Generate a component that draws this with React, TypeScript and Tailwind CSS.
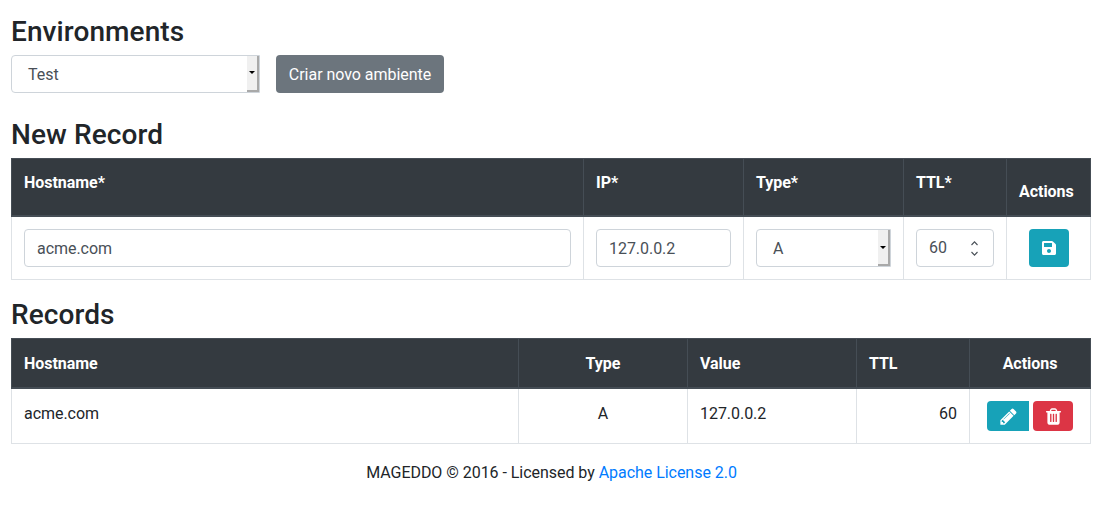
import { FaSave } from 'react-icons/fa';

const PENCIL = "M491 1536l91-91-235-235-91 91v107h128v128h107zm523-928q0-22-22-22-10 0-17 7l-542 542q-7 7-7 17 0 22 22 22 10 0 17-7l542-542q7-7 7-17zm-54-192l416 416-832 832h-416v-416zm683 96q0 53-37 90l-166 166-416-416 166-165q36-38 90-38 53 0 91 38l235 234q37 39 37 91z";
const TRASH = "M704 1376v-704q0-14-9-23t-23-9h-64q-14 0-23 9t-9 23v704q0 14 9 23t23 9h64q14 0 23-9t9-23zm256 0v-704q0-14-9-23t-23-9h-64q-14 0-23 9t-9 23v704q0 14 9 23t23 9h64q14 0 23-9t9-23zm256 0v-704q0-14-9-23t-23-9h-64q-14 0-23 9t-9 23v704q0 14 9 23t23 9h64q14 0 23-9t9-23zm-544-992h448l-48-117q-7-9-17-11h-317q-10 2-17 11zm928 32v64q0 14-9 23t-23 9h-96v948q0 83-47 143.5t-113 60.5h-832q-66 0-113-58.5t-47-141.5v-952h-96q-14 0-23-9t-9-23v-64q0-14 9-23t23-9h309l70-167q15-37 54-63t79-26h320q40 0 79 26t54 63l70 167h309q14 0 23 9t9 23z";

function FakeSelect({ value, className }: { value: string; className: string }) {
  return (
    <div className={`flex h-[38px] rounded-l-[4px] border border-[#ced4da] bg-white text-[#495057] ${className}`}>
      <div className="flex-1 pt-px pl-4 leading-[36px]">{value}</div>
      <div className="flex w-[12px] items-center justify-center border-r-2 border-b-2 border-[#a9a9a9] bg-[#f0f0f0]">
        <div className="h-0 w-0 border-x-[3px] border-t-[3px] border-x-transparent border-t-black" />
      </div>
    </div>
  );
}

const thHead = "border border-[#454d55] border-b-2 align-top px-3 pt-3 text-left font-bold";
const thBottom = "border border-[#454d55] border-b-2 align-bottom px-3 pt-[13px] pb-[11px] font-bold";
const td = "border border-[#dee2e6] p-3 align-top";
const tdText = "border border-[#dee2e6] px-3 pt-[13px] pb-[11px] align-top";
const inputCls = "block h-[38px] w-full rounded-[4px] border border-[#ced4da] bg-white px-3 text-[#495057]";
const heading = "mb-[6.4px] text-[28px] leading-[33.6px] font-medium tracking-[0.09px]";

export default function App() {
  return (
    <div className="w-[1112px] pl-[11px] pt-[15px] font-['Roboto',sans-serif] text-base tracking-[-0.04px] text-[#212529]">
      <div className="w-[1079px]">
        <h3 className={heading}>Environments</h3>
        <div className="flex gap-4">
          <FakeSelect value="Test" className="w-[249px]" />
          <button className="h-[38px] w-[168px] rounded-[4px] bg-[#6c757d] pt-[2px] text-center text-white">Criar novo ambiente</button>
        </div>

        <h3 className={`mt-[25px] ${heading}`}>New Record</h3>
        <table className="w-[1079px] table-fixed border-collapse">
          <colgroup>
            <col className="w-[572px]" />
            <col className="w-[160px]" />
            <col className="w-[160px]" />
            <col className="w-[103px]" />
            <col className="w-[84px]" />
          </colgroup>
          <thead className="bg-[#343a40] text-white">
            <tr className="h-[58px]">
              <th className={thHead}>Hostname*</th>
              <th className={thHead}>IP*</th>
              <th className={thHead}>Type*</th>
              <th className={thHead}>TTL*</th>
              <th className={`${thBottom} text-left`}>Actions</th>
            </tr>
          </thead>
          <tbody>
            <tr>
              <td className={td}><input readOnly value="acme.com" className={inputCls} /></td>
              <td className={td}><input readOnly value="127.0.0.2" className={inputCls} /></td>
              <td className={td}><FakeSelect value="A" className="w-[135px]" /></td>
              <td className={td}>
                <div className="flex h-[38px] items-center justify-between rounded-[4px] border border-[#ced4da] bg-white pr-[14px] pl-3 text-[#495057]">
                  <span>60</span>
                  <svg width="9" height="15" viewBox="0 0 9 15" fill="none" stroke="#495057" strokeWidth="1.1">
                    <path d="M1.5 4L4.5 0.8L7.5 4" />
                    <path d="M1.5 11L4.5 14.2L7.5 11" />
                  </svg>
                </div>
              </td>
              <td className={td}>
                <button className="mx-auto flex h-[38px] w-[40px] items-center justify-center rounded-[4px] bg-[#17a2b8] text-white">
                  <FaSave className="h-4 w-4" />
                </button>
              </td>
            </tr>
          </tbody>
        </table>

        <h3 className={`mt-[18px] ${heading}`}>Records</h3>
        <table className="w-[1079px] table-fixed border-collapse">
          <colgroup>
            <col className="w-[507px]" />
            <col className="w-[169px]" />
            <col className="w-[169px]" />
            <col className="w-[113px]" />
            <col className="w-[121px]" />
          </colgroup>
          <thead className="bg-[#343a40] text-white">
            <tr>
              <th className={thBottom + " text-left"}>Hostname</th>
              <th className={thBottom + " text-center"}>Type</th>
              <th className={thBottom + " text-left"}>Value</th>
              <th className={thBottom + " text-left"}>TTL</th>
              <th className={thBottom + " text-center"}>Actions</th>
            </tr>
          </thead>
          <tbody>
            <tr>
              <td className={tdText}>acme.com</td>
              <td className={`${tdText} text-center`}>A</td>
              <td className={tdText}>127.0.0.2</td>
              <td className={`${tdText} text-right`}>60</td>
              <td className={td}>
                <div className="flex justify-center gap-1">
                  <button className="flex h-[30px] w-[42px] items-center justify-center rounded-l-[4px] bg-[#17a2b8] text-white">
                    <svg viewBox="0 0 1792 1792" className="h-[19px] w-[19px]" fill="currentColor"><path d={PENCIL} /></svg>
                  </button>
                  <button className="flex h-[30px] w-[40px] items-center justify-center rounded-[4px] bg-[#dc3545] text-white">
                    <svg viewBox="0 0 1792 1792" className="h-[19px] w-[19px]" fill="currentColor"><path d={TRASH} /></svg>
                  </button>
                </div>
              </td>
            </tr>
          </tbody>
        </table>

        <p className="mt-[17px] pl-[2px] text-center">
          MAGEDDO © 2016 - Licensed by <a href="#" className="text-[#007bff]">Apache License 2.0</a>
        </p>
      </div>
    </div>
  );
}
